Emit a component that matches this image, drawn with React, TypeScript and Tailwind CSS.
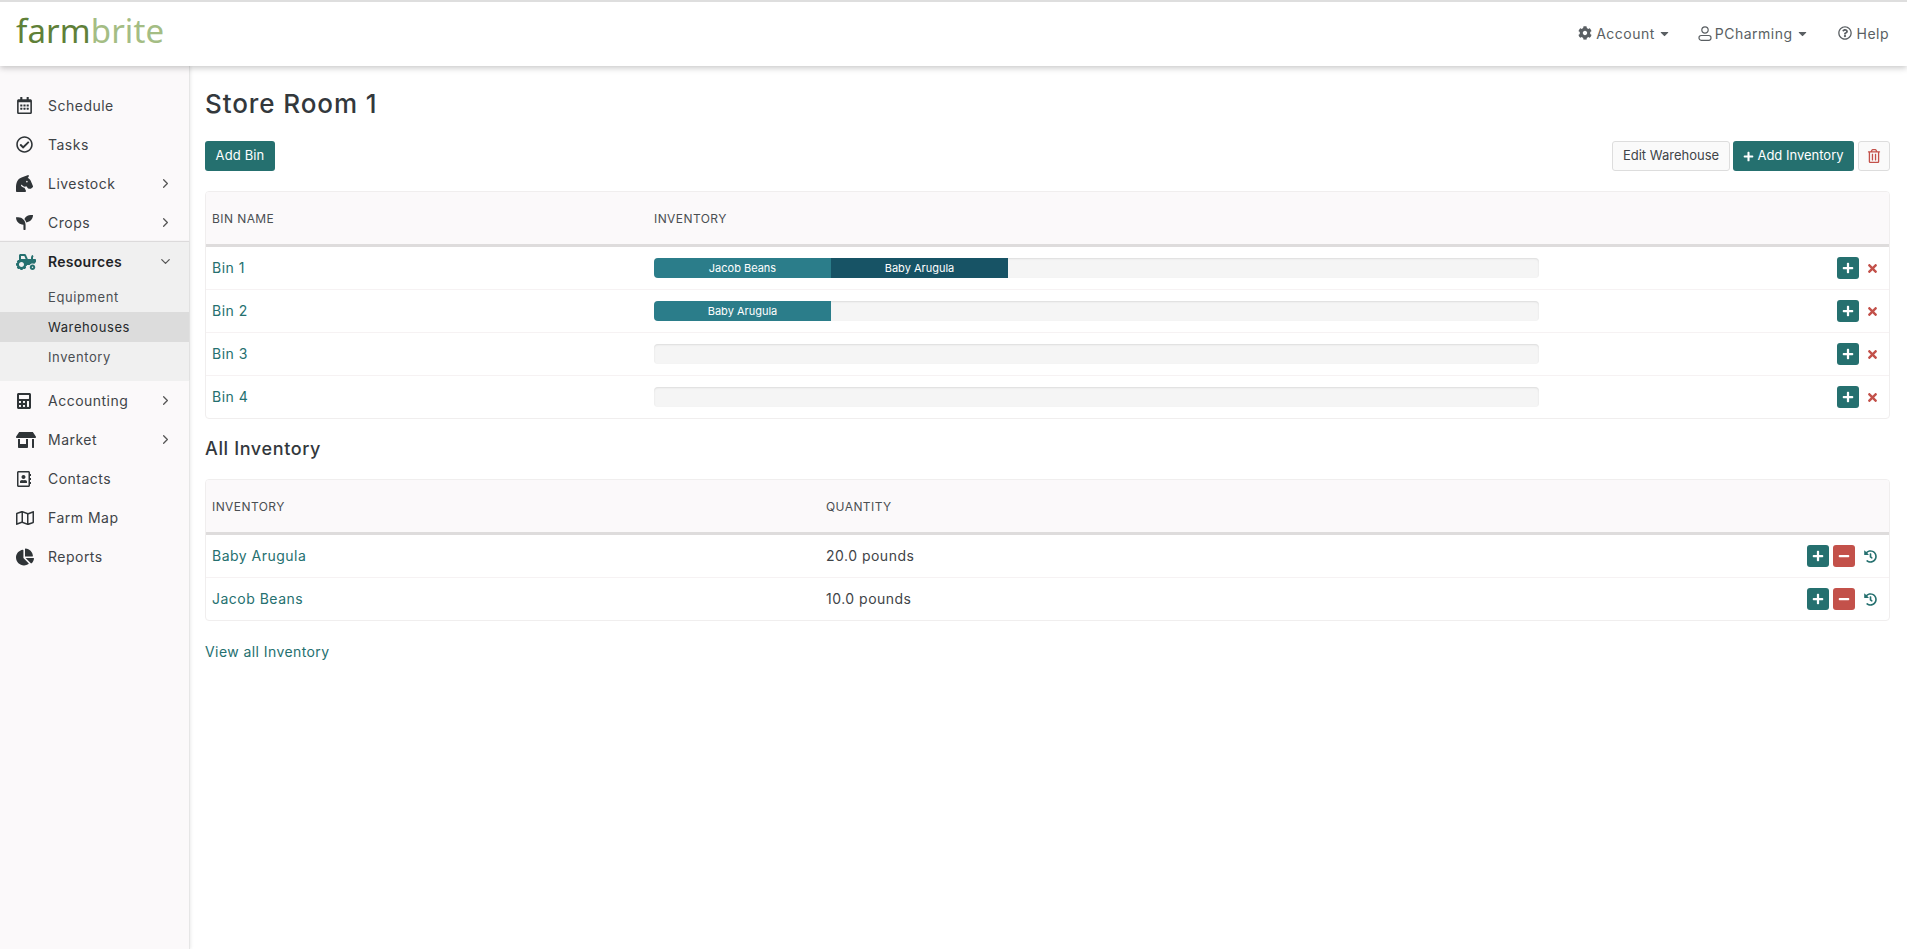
import React from "react";
import { FaRegCalendarAlt, FaRegCheckCircle, FaHorseHead, FaSeedling, FaTractor, FaCalculator, FaStoreAlt, FaRegAddressBook, FaRegMap, FaChartPie, FaCog, FaRegQuestionCircle, FaRegTrashAlt, FaHistory, FaPlus, FaMinus, FaTimes, FaCaretDown } from "react-icons/fa";
import { ChevronRight, ChevronDown } from "lucide-react";

const font = "font-['Inter','Liberation_Sans',sans-serif]";

function NavItem({ icon, label, arrow }: { icon: React.ReactNode; label: string; arrow?: boolean }) {
  return (
    <div className="flex h-[39px] items-center pl-[16px] pr-[16px] text-[14px] tracking-[0.035em] text-[#3f4448]">
      <span className="flex w-[32px] shrink-0 items-center text-[#2f3437]">{icon}</span>
      <span className="flex-1">{label}</span>
      {arrow && <ChevronRight size={15} className="text-[#555]" />}
    </div>
  );
}

function SubItem({ label, active }: { label: string; active?: boolean }) {
  return (
    <div className={`flex h-[30px] items-center pl-[48px] pt-[2px] text-[13px] tracking-[0.045em] ${active ? "bg-[#dcdcdc] text-[#26292b]" : "text-[#4a4e52]"}`}>{label}</div>
  );
}

function Sidebar() {
  return (
    <aside className="w-[190px] shrink-0 border-r border-[#e6e6e6] bg-[#fbf9fa] pt-[20px] shadow-[1px_0_3px_rgba(0,0,0,0.08)]">
      <NavItem icon={<FaRegCalendarAlt size={17} />} label="Schedule" />
      <NavItem icon={<FaRegCheckCircle size={17} />} label="Tasks" />
      <NavItem icon={<FaHorseHead size={17} />} label="Livestock" arrow />
      <NavItem icon={<FaSeedling size={17} />} label="Crops" arrow />
      <div className="h-[139px] bg-[#f0f0f0] shadow-[0_-1px_1px_rgba(0,0,0,0.12)]">
        <div className="flex h-[39px] items-center pl-[16px] pr-[16px] text-[14px] font-semibold tracking-[0.02em] text-[#1f2326]">
          <span className="flex w-[32px] shrink-0 items-center text-[#25706f]"><FaTractor size={20} /></span>
          <span className="flex-1">Resources</span>
          <ChevronDown size={15} className="text-[#555]" />
        </div>
        <div className="mt-px">
          <SubItem label="Equipment" />
          <SubItem label="Warehouses" active />
          <SubItem label="Inventory" />
        </div>
      </div>
      <NavItem icon={<FaCalculator size={16} />} label="Accounting" arrow />
      <NavItem icon={<FaStoreAlt size={20} />} label="Market" arrow />
      <NavItem icon={<FaRegAddressBook size={16} />} label="Contacts" />
      <NavItem icon={<FaRegMap size={18} />} label="Farm Map" />
      <NavItem icon={<FaChartPie size={18} />} label="Reports" />
    </aside>
  );
}

function Header() {
  return (
    <header className="relative z-10 h-[66px] shrink-0 border-t-[2px] border-[#dedede] bg-white shadow-[0_2px_6px_rgba(0,0,0,0.22)]">
      <div className="flex h-full items-center justify-between pl-[16px] pr-[18px]">
        <div className="-mt-[8px] font-['Noto_Sans',sans-serif] text-[33px] font-normal leading-none tracking-[0.1px]">
          <span className="text-[#5f8038]">farm</span>
          <span className="text-[#a4bd84]">brite</span>
        </div>
        <div className="-mt-[2px] flex items-center text-[14px] tracking-[0.035em] text-[#5a5f63]">
          <FaCog size={14} />
          <span className="ml-[4px]">Account</span>
          <FaCaretDown size={13} className="ml-[3px]" />
          <svg width="14" height="15" viewBox="0 0 14 15" fill="none" stroke="currentColor" strokeWidth="1.2" className="ml-[27px]">
            <circle cx="7" cy="4" r="3.2" />
            <rect x="1" y="9.5" width="12" height="4.8" rx="2.2" />
          </svg>
          <span className="ml-[3px]">PCharming</span>
          <FaCaretDown size={13} className="ml-[3px]" />
          <FaRegQuestionCircle size={14} className="ml-[29px]" />
          <span className="ml-[5px]">Help</span>
        </div>
      </div>
    </header>
  );
}

function SquareBtn({ kind }: { kind: "plus" | "minus" }) {
  return (
    <span className={`flex h-[22px] w-[22px] items-center justify-center rounded-[3px] text-white ${kind === "plus" ? "bg-[#25706f]" : "bg-[#c3514a]"}`}>
      {kind === "plus" ? <FaPlus size={12} /> : <FaMinus size={12} />}
    </span>
  );
}

function Bar({ segs }: { segs: { label: string; dark?: boolean }[] }) {
  return (
    <div className="flex h-[20px] w-[885px] overflow-hidden rounded-[4px] bg-[#f5f5f5] shadow-[inset_0_1px_2px_rgba(0,0,0,0.1)]">
      {segs.map((s) => (
        <div key={s.label} className={`flex h-full w-[177px] items-center justify-center text-[11px] text-white ${s.dark ? "bg-[#175365]" : "bg-[#2b7d8a]"}`}>{s.label}</div>
      ))}
    </div>
  );
}

function BinRow({ name, segs, last }: { name: string; segs: { label: string; dark?: boolean }[]; last?: boolean }) {
  return (
    <div className={`flex items-center ${last ? "h-[42px]" : "h-[43px] border-b border-[#f6f2f3]"}`}>
      <a className="w-[448px] pb-[2px] pl-[6px] text-[14px] tracking-[0.035em] text-[#25706f]">{name}</a>
      <Bar segs={segs} />
      <div className="flex flex-1 items-center justify-end gap-[7px] pr-[10px]">
        <SquareBtn kind="plus" />
        <FaTimes size={13} className="text-[#c3514a]" />
      </div>
    </div>
  );
}

function InvRow({ name, qty, last }: { name: string; qty: string; last?: boolean }) {
  return (
    <div className={`flex items-center text-[14px] tracking-[0.035em] ${last ? "h-[42px]" : "h-[43px] border-b border-[#f6f2f3]"}`}>
      <a className="w-[620px] pb-[2px] pl-[6px] text-[#25706f]">{name}</a>
      <span className="flex-1 pb-[2px] text-[#3f4448]">{qty}</span>
      <div className="flex items-center gap-[4px] pr-[12px]">
        <SquareBtn kind="plus" />
        <SquareBtn kind="minus" />
        <FaHistory size={13} className="ml-[5px] text-[#25706f]" />
      </div>
    </div>
  );
}

export default function App() {
  return (
    <div className={`flex h-[949px] w-full flex-col overflow-hidden bg-white ${font}`}>
      <Header />
      <div className="flex min-h-0 flex-1">
        <Sidebar />
        <main className="flex-1 pl-[15px] pr-[17px]">
          <h1 className="mt-[20px] text-[26px] font-medium leading-[36px] tracking-[0.035em] text-[#33383c]">Store Room 1</h1>
          <div className="mt-[19px] flex items-center justify-between">
            <button className="h-[30px] w-[70px] rounded-[3px] bg-[#25706f] text-[13px] tracking-[0.01em] text-white">Add Bin</button>
            <div className="flex items-center">
              <button className="h-[30px] w-[118px] rounded-[3px] border border-[#dddddd] bg-[#fafafa] text-[13px] text-[#3f4448]">Edit Warehouse</button>
              <button className="ml-[3px] flex h-[30px] w-[121px] items-center justify-center gap-[3px] rounded-[3px] bg-[#25706f] text-[13px] text-white"><FaPlus size={11} />Add Inventory</button>
              <button className="ml-[4px] flex h-[30px] w-[32px] items-center justify-center rounded-[3px] border border-[#dddddd] bg-[#fafafa] text-[#c3514a]"><FaRegTrashAlt size={14} /></button>
            </div>
          </div>
          <section className="mt-[20px] overflow-hidden rounded-[4px] border border-[#f0eeee]">
            <div className="flex h-[55px] items-center border-b-[3px] border-[#dedcdc] bg-[#fbf9fa] pt-[2px] text-[12px] tracking-[0.035em] text-[#4a4e52]">
              <span className="w-[448px] pl-[6px]">BIN NAME</span>
              <span>INVENTORY</span>
            </div>
            <BinRow name="Bin 1" segs={[{ label: "Jacob Beans" }, { label: "Baby Arugula", dark: true }]} />
            <BinRow name="Bin 2" segs={[{ label: "Baby Arugula" }]} />
            <BinRow name="Bin 3" segs={[]} />
            <BinRow name="Bin 4" segs={[]} last />
          </section>
          <h2 className="mt-[18px] text-[18px] font-medium leading-[24px] tracking-[0.035em] text-[#33383c]">All Inventory</h2>
          <section className="mt-[18px] overflow-hidden rounded-[4px] border border-[#f0eeee]">
            <div className="flex h-[55px] items-center border-b-[3px] border-[#dedcdc] bg-[#fbf9fa] pt-[2px] text-[12px] tracking-[0.035em] text-[#4a4e52]">
              <span className="w-[620px] pl-[6px]">INVENTORY</span>
              <span>QUANTITY</span>
            </div>
            <InvRow name="Baby Arugula" qty="20.0 pounds" />
            <InvRow name="Jacob Beans" qty="10.0 pounds" last />
          </section>
          <a className="mt-[21px] block text-[14px] leading-[20px] tracking-[0.03em] text-[#25706f]">View all Inventory</a>
        </main>
      </div>
    </div>
  );
}
